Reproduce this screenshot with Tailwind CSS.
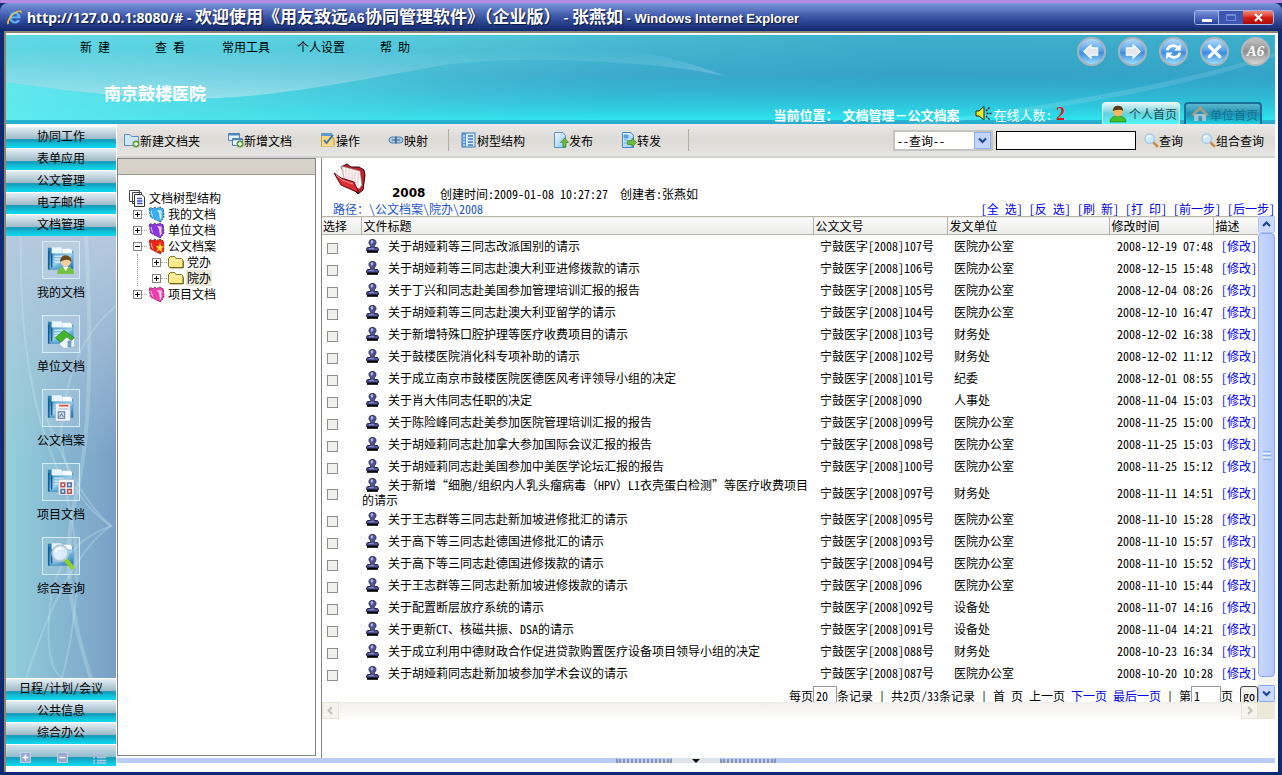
<!DOCTYPE html>
<html lang="zh-CN">
<head>
<meta charset="utf-8">
<title>欢迎使用《用友致远A6协同管理软件》（企业版）</title>
<script src="https://cdn.jsdelivr.net/npm/@tailwindcss/browser@4"></script>
</head>
<body class="h-screen overflow-hidden bg-white font-['Noto_Sans_CJK_SC',sans-serif] text-[12px] leading-[15px] text-black [font-feature-settings:'hwid']">

<svg class="absolute size-0" aria-hidden="true">
  <defs>
    <linearGradient id="gBall" x1="0" y1="0" x2="0" y2="1"><stop offset="0" stop-color="#b9defa"/><stop offset=".45" stop-color="#5aa4ea"/><stop offset=".55" stop-color="#3f8cde"/><stop offset="1" stop-color="#9fe6ff"/></linearGradient>
    <linearGradient id="gBallGray" x1="0" y1="0" x2="0" y2="1"><stop offset="0" stop-color="#c4c4c4"/><stop offset=".5" stop-color="#8f8f8f"/><stop offset="1" stop-color="#dcdcdc"/></linearGradient>
    <linearGradient id="gDoc" x1="0" y1="0" x2="1" y2="1"><stop offset="0" stop-color="#f4fbff"/><stop offset="1" stop-color="#8dc3f0"/></linearGradient>
    <linearGradient id="gBox" x1="0" y1="0" x2="1" y2="1"><stop offset="0" stop-color="#2f86bd"/><stop offset=".5" stop-color="#7fc2e6"/><stop offset="1" stop-color="#1e6fae"/></linearGradient>
  </defs>
  <symbol id="stamp" viewBox="0 0 13 14">
    <path d="M6.500 0.500C8.700 .5 10 1.700 10 3.500C10 5 8.600 5.800 8.300 7.500L8.500 8.500H11.500L12.500 10V11.500H.5V10L1.500 8.500H4.500L4.700 7.500C4.400 5.800 3 5 3 3.500C3 1.700 4.300 .5 6.500 .5Z" fill="#4f5398" stroke="#16183c" stroke-width=".9"/>
    <path d="M5 2Q6 1 7 2L6 4.500Q4.500 4 5 2ZM3 9.600H8" fill="#c4c8ee" stroke="#aab0e4" stroke-width=".7"/>
    <rect x="1" y="12" width="11" height="1.800" fill="#000"/>
  </symbol>
  <symbol id="plus" viewBox="0 0 9 9"><rect x=".5" y=".5" width="8" height="8" fill="#fff" stroke="#848484"/><path d="M2 4.500H7M4.500 2V7" stroke="#000"/></symbol>
  <symbol id="minus" viewBox="0 0 9 9"><rect x=".5" y=".5" width="8" height="8" fill="#fff" stroke="#848484"/><path d="M2 4.500H7" stroke="#000"/></symbol>
  <symbol id="book" viewBox="0 0 17 16">
    <path d="M1 2.500L3 1.500L4.500 2.500L7 1L8.500 2.500L12 1L15.500 3L16 11L13 15.500H11L2.500 11Z" fill="currentColor" stroke="#3a3a3a" stroke-width=".8" stroke-dasharray="2 1"/>
    <path d="M9 4L13.500 4.500V12L12 14L11 7Z" fill="#fff" fill-opacity=".8"/>
    <path d="M1.500 3.500L10 6.500L11 15L3 11Z" fill="currentColor"/><path d="M3 5L4.500 10.500" stroke="#fff" stroke-opacity=".7"/>
  </symbol>
  <symbol id="folder" viewBox="0 0 16 14">
    <path d="M.5 3.500L2.500 1.500H6.500L8 3.500H13.500L15 5V12.500H1.500L.5 11Z" fill="#ffe88a" stroke="#8c7a1c"/><path d="M1.500 5H13.500M2 4V11" stroke="#fffbd0"/><path d="M2 12.900H15.300V6" fill="none" stroke="#5b4e10" stroke-width=".8"/>
  </symbol>
  <symbol id="lens" viewBox="0 0 16 16"><path d="M10 10L14 14" stroke="#d28a3c" stroke-width="3" stroke-linecap="round"/><circle cx="6" cy="6" r="5" fill="#cfe9fb" stroke="#a5cbe8" stroke-width="1.500"/><path d="M3 5.500Q4 3 7 3" stroke="#fff" stroke-width="1.500" fill="none"/></symbol>
  <symbol id="boxbase" viewBox="0 0 32 32">
    <path d="M2 3H12L14 6H29V26H2Z" fill="#2a7fb8"/><path d="M6 2.500H16L18 5V12H6Z" fill="#e9f6ff"/><path d="M18 4H26L28 6V12H18Z" fill="#f6fbff"/>
    <path d="M3 9H29V26L3 25Z" fill="url(#gBox)"/><path d="M3 6V26M6 9V24" stroke="#14598f" stroke-width="1.500"/><path d="M9 12H19M9 15H17M9 18H15" stroke="#d5effc" stroke-width="1.200"/><path d="M7 23L28 12V10H7Z" fill="#fff" fill-opacity=".25"/>
  </symbol>
</svg>

<div class="flex h-full flex-col bg-[#0d2a73]">
  <div class="h-[3px] shrink-0 bg-[#b58be0]"></div>

  <!-- window title bar -->
  <header class="flex h-7 shrink-0 items-center gap-1 rounded-t-lg bg-linear-to-b from-[#7d95dc] via-[#3c56a8] to-[#12276b] pl-[6px] pr-2 font-bold text-white [text-shadow:1px_1px_1px_#0a1640]">
    <svg class="size-[17px] shrink-0" viewBox="0 0 17 17"><path d="M8.500 2.500A6 6 0 1 0 14.500 11H10.800A2.700 2.700 0 0 1 5.900 9.400H14.700A6 6 0 0 0 8.500 2.500ZM5.900 7.200A2.700 2.700 0 0 1 11.200 7.200Z" fill="#67b4f5" stroke="#2467c0" stroke-width=".5"/><path d="M1.500 15.500C-.5 12 6 3 13 1.500C15.500 1 16.500 2.500 15 5.500C15.500 3 14 2.300 11.500 3.200C6.500 5.500 2 11.500 3 14.500Z" fill="#f6c33c"/></svg>
    <h1 class="flex grow items-baseline whitespace-pre text-[14px] leading-[20px] [font-feature-settings:normal]"><span class="font-['Noto_Sans']">http://127.0.0.1:8080/# - </span><span class="text-[17px]">欢迎使用《用友致远</span><span class="font-['Liberation_Mono']">A6</span><span class="text-[17px]">协同管理软件》（企业版）</span><span> - </span><span class="text-[17px]">张燕如</span><span class="font-['Liberation_Sans'] text-[13px]"> - Windows Internet Explorer</span></h1>
    <div class="flex h-[15px] overflow-hidden rounded-[3px] border border-[#a9b6e6]">
      <button aria-label="最小化" class="flex w-6 items-end justify-center border-r border-[#a9b6e6] bg-linear-to-b from-[#7c93dd] to-[#24409c] pb-[2px]"><span class="h-[3px] w-[10px] bg-white"></span></button>
      <button aria-label="最大化" class="flex w-6 items-center justify-center bg-[#3c56b2]"><span class="h-[7px] w-[10px] border border-t-2 border-[#7189d8]"></span></button>
      <button aria-label="关闭" class="flex w-[30px] items-center justify-center bg-linear-to-b from-[#f08a7c] via-[#d81e14] to-[#a80a08]"><svg class="size-[9px]" viewBox="0 0 9 9"><path d="M1 1L8 8M8 1L1 8" stroke="#fff" stroke-width="2"/></svg></button>
    </div>
  </header>

  <div class="mx-1 mb-[3px] flex min-h-0 flex-1 flex-col border-l-2 border-t-2 border-[#8a8573] bg-white pr-[3px] pt-[2px]">

    <!-- banner -->
    <div class="relative h-[89px] shrink-0 overflow-hidden bg-linear-to-r from-[#63dce6] via-[#3fadca] via-70% to-[#3cb0cc]">
      <svg class="absolute inset-0 size-full" viewBox="0 0 1270 90" preserveAspectRatio="none">
        <defs>
          <linearGradient id="lo" x1="0" y1="0" x2="0" y2="1"><stop offset="0" stop-color="#2795c3" stop-opacity="0"/><stop offset=".45" stop-color="#2795c3" stop-opacity=".45"/><stop offset=".95" stop-color="#2de4ee"/><stop offset=".96" stop-color="#22b4d0"/><stop offset="1" stop-color="#30a8cc"/></linearGradient>
          <linearGradient id="sw" gradientUnits="userSpaceOnUse" x1="0" y1="15" x2="0" y2="66"><stop offset="0" stop-color="#fff" stop-opacity="0"/><stop offset="1" stop-color="#fff" stop-opacity=".42"/></linearGradient>
          <linearGradient id="aq" x1="0" y1="0" x2="1" y2="0"><stop offset="0" stop-color="#62f2f4" stop-opacity=".7"/><stop offset="1" stop-color="#45e6ee" stop-opacity="0"/></linearGradient>
          <linearGradient id="lt" x1="0" y1="0" x2="1" y2="0"><stop offset="0" stop-color="#5fd6e2" stop-opacity=".8"/><stop offset="1" stop-color="#5fd6e2" stop-opacity="0"/></linearGradient>
        </defs>
        <rect width="1270" height="90" fill="url(#lo)"/>
        <rect width="600" height="86" fill="url(#lt)"/>
        <path d="M0 48C100 62 170 68 240 62C320 54 380 40 440 30Q520 20 640 30Q690 34 720 42Q680 24 600 10L560 0H0Z" fill="url(#sw)"/>
        <path d="M0 48C100 62 170 68 240 62C320 54 380 40 440 30V86H0Z" fill="url(#aq)"/>
        <path d="M900 90Q1140 60 1270 18V22Q1140 66 930 90Z" fill="#fff" fill-opacity=".12"/>
      </svg>
      <div class="relative flex h-full flex-col pl-[74px] pr-[5px]">
        <div class="flex items-start">
          <nav class="grid grid-cols-[75px_67px_75px_83px_40px] pt-[4px]">
            <a href="#">新 建</a><a href="#">查 看</a><a href="#">常用工具</a><a href="#">个人设置</a><a href="#">帮 助</a>
          </nav>
          <div class="ml-auto flex gap-3 pt-[2px]">
            <button aria-label="后退"><svg class="size-[29px]" viewBox="0 0 28 28"><circle cx="14" cy="14" r="13" fill="url(#gBall)" stroke="#a9b4bd" stroke-width="2"/><path d="M6.500 14L13.500 7.500V10.500H20V17.500H13.500V20.500Z" fill="#e4e6ea" stroke="#fff"/></svg></button>
            <button aria-label="前进"><svg class="size-[29px]" viewBox="0 0 28 28"><circle cx="14" cy="14" r="13" fill="url(#gBall)" stroke="#a9b4bd" stroke-width="2"/><path d="M21.500 14L14.500 7.500V10.500H8V17.500H14.500V20.500Z" fill="#e4e6ea" stroke="#fff"/></svg></button>
            <button aria-label="刷新"><svg class="size-[29px]" viewBox="0 0 28 28"><circle cx="14" cy="14" r="13" fill="url(#gBall)" stroke="#a9b4bd" stroke-width="2"/><path d="M8 13C8.500 8.500 15 6.500 18.500 10.500M20 15C19.500 19.500 13 21.500 9.500 17.500" fill="none" stroke="#fff" stroke-width="2.600"/><path d="M21 6.500V13H14.500ZM7 21.500V15H13.500Z" fill="#fff"/></svg></button>
            <button aria-label="退出"><svg class="size-[29px]" viewBox="0 0 28 28"><circle cx="14" cy="14" r="13" fill="url(#gBall)" stroke="#a9b4bd" stroke-width="2"/><path d="M9 9L19 19M19 9L9 19" stroke="#fff" stroke-width="3.200" stroke-linecap="round"/></svg></button>
            <button aria-label="关于A6" class="relative"><svg class="size-[29px]" viewBox="0 0 28 28"><circle cx="14" cy="14" r="13" fill="url(#gBallGray)" stroke="#b9b9b9" stroke-width="2"/></svg><span class="absolute inset-0 flex items-center justify-center font-['Liberation_Serif',serif] text-[15px] font-bold italic text-white">A6</span></button>
          </div>
        </div>
        <div class="pl-[24px] pt-[19px] text-[17px] font-bold leading-[16px] text-white">南京鼓楼医院</div>
        <div class="mt-auto flex items-end justify-end text-[13px] text-white">
          <div class="pb-[2px] font-bold [font-feature-settings:normal]">当前位置：<span class="pl-1">文档管理－公文档案</span></div>
          <svg class="mb-[2px] ml-4 size-[17px]" viewBox="0 0 17 17"><path d="M1 6H4L9 1.500V15L4 11H1Z" fill="#e6ee1e" stroke="#222"/><path d="M11 6L15 2M11.500 8.500H16.500M11 11L15 15" stroke="#222" stroke-width="1.400" stroke-dasharray="2 1"/></svg>
          <div class="pb-[2px] pl-[1px]">在线人数:</div>
          <b class="w-[50px] pb-[2px] pl-1 font-['Liberation_Serif',serif] text-[18px] text-[#e81414]">2</b>
          <button class="flex h-[22px] w-[78px] items-center gap-[2px] rounded-t-sm border border-b-0 border-[#e8fbfc] bg-linear-to-b from-[#e2f6f8] via-[#63d2dc] to-[#4ef6f8] pl-[6px] text-[12px] text-[#1d4d55]">
            <svg class="size-[18px] shrink-0" viewBox="0 0 18 18"><path d="M1 17Q1 11 9 11Q17 11 17 17Z" fill="#43c02c" stroke="#2a8418" stroke-width=".7"/><circle cx="9" cy="6.500" r="5" fill="#f2b95c"/><path d="M3.800 6Q4 .8 9 .8Q14 .8 14.200 6Q11 3.500 3.800 6Z" fill="#5a3a1a"/></svg>个人首页</button>
          <button class="ml-[4px] mr-[8px] flex h-[22px] w-[78px] items-center gap-[1px] rounded-t-sm border-2 border-b-0 border-[#186f96] bg-linear-to-b from-[#58b7cc] via-[#1a90b4] to-[#1fd0e0] pl-[5px] text-[12px] text-[#117089]">
            <svg class="size-[18px] shrink-0" viewBox="0 0 18 18"><path d="M3 9V16H15V9" fill="#9fc4cf"/><path d="M0 10L9 1L18 10L16 11L9 5L2 11Z" fill="#a59a80"/><rect x="7.500" y="11" width="3.500" height="5" fill="#3b97ad"/></svg>单位首页</button>
        </div>
      </div>
    </div>

    <div class="flex min-h-0 flex-1">

      <!-- left navigation -->
      <aside class="mb-[6px] flex w-[110px] shrink-0 flex-col pt-[2px]">
        <button class="h-[22px] shrink-0 border-t border-white bg-[linear-gradient(#e6eff5,#9cb9c8_56%,#1499b8_60%,#0fd6ec_95%)] pb-[4px]">协同工作</button>
        <button class="h-[22px] shrink-0 border-t border-white bg-[linear-gradient(#e6eff5,#9cb9c8_56%,#1499b8_60%,#0fd6ec_95%)] pb-[4px]">表单应用</button>
        <button class="h-[22px] shrink-0 border-t border-white bg-[linear-gradient(#e6eff5,#9cb9c8_56%,#1499b8_60%,#0fd6ec_95%)] pb-[4px]">公文管理</button>
        <button class="h-[22px] shrink-0 border-t border-white bg-[linear-gradient(#e6eff5,#9cb9c8_56%,#1499b8_60%,#0fd6ec_95%)] pb-[4px]">电子邮件</button>
        <button class="h-[22px] shrink-0 border-t border-white bg-[linear-gradient(#e6eff5,#9cb9c8_56%,#1499b8_60%,#0fd6ec_95%)] pb-[4px]">文档管理</button>
        <div class="relative min-h-0 flex-1 overflow-hidden bg-linear-to-r from-[#93d0dc] to-[#7a9fc6]">
          <svg class="absolute inset-0 size-full" viewBox="0 0 110 442" preserveAspectRatio="none">
            <defs><linearGradient id="topfade" x1="0" y1="0" x2="0" y2="1"><stop offset="0" stop-color="#b5c9de"/><stop offset=".5" stop-color="#b5c9de" stop-opacity="0"/></linearGradient></defs>
            <rect width="110" height="442" fill="url(#topfade)"/>
            <g fill="none" stroke="#d8f4f8" stroke-opacity=".25" stroke-width="2"><path d="M15 0Q12 140 50 230T56 442"/><path d="M110 70Q60 110 55 200Q60 260 105 290Q60 320 20 442"/><path d="M80 0Q90 180 70 260T85 442" stroke-width="4"/><path d="M40 180Q70 260 105 290Q50 310 44 370T56 442"/></g>
          </svg>
          <div class="relative flex flex-col items-center gap-4 pt-[5px]">
            <button class="flex flex-col items-center gap-[5px]"><span class="border border-[#d5edf2] bg-white/10 p-[3px]"><svg class="size-[30px]" viewBox="0 0 32 32"><use href="#boxbase"/><path d="M12 31Q12 23 21 23Q30 23 30 31Z" fill="#74c243"/><path d="M18 23L21 28L24 23Z" fill="#fff"/><circle cx="21" cy="17.500" r="5.500" fill="#f3cf9b"/><path d="M15 18Q15 11 21 11Q27 11 27 18Q23 13.500 15 18Z" fill="#6e4b1e"/></svg></span>我的文档</button>
            <button class="flex flex-col items-center gap-[5px]"><span class="border border-[#d5edf2] bg-white/10 p-[3px]"><svg class="size-[30px]" viewBox="0 0 32 32"><use href="#boxbase"/><path d="M15 21L24 17L30 21V29L19 31L15 27Z" fill="#f1f5f8"/><path d="M10 20L19 12L30 20L27 23L22 19L16 25Z" fill="#43b52c" stroke="#23791a" stroke-width=".7"/><rect x="23" y="23" width="4" height="7" fill="#6c9fc4"/></svg></span>单位文档</button>
            <button class="flex flex-col items-center gap-[5px]"><span class="border border-[#d5edf2] bg-white/10 p-[3px]"><svg class="size-[30px]" viewBox="0 0 32 32"><use href="#boxbase"/><path d="M10 11H26V30H10Z" fill="#eef4fb" stroke="#8eabc6" stroke-width=".7"/><path d="M14 13.500H24" stroke="#e0533c" stroke-width="2"/><path d="M13 17H24" stroke="#9ab4cc"/><rect x="13" y="20" width="7" height="7" fill="#cfdcea" stroke="#536f92"/><path d="M14.500 25.500L16.500 22L18.500 25.500" stroke="#536f92" fill="none"/></svg></span>公文档案</button>
            <button class="flex flex-col items-center gap-[5px]"><span class="border border-[#d5edf2] bg-white/10 p-[3px]"><svg class="size-[30px]" viewBox="0 0 32 32"><use href="#boxbase"/><rect x="13" y="13" width="17" height="17" fill="#f5f7fb" stroke="#93a8c0" stroke-width=".7"/><g stroke-width="1.600" fill="#d9e2ef"><rect x="16" y="17" width="4" height="4" stroke="#c0504a"/><rect x="23" y="17" width="4" height="4" stroke="#4f6fa8"/><rect x="16" y="24" width="4" height="4" stroke="#4f6fa8"/><rect x="23" y="24" width="4" height="4" stroke="#c0504a"/></g></svg></span>项目文档</button>
            <button class="flex flex-col items-center gap-[5px]"><span class="border border-[#d5edf2] bg-white/10 p-[3px]"><svg class="size-[30px]" viewBox="0 0 32 32"><use href="#boxbase"/><path d="M21 20L28 28" stroke="#8fd025" stroke-width="4.500" stroke-linecap="round"/><circle cx="15" cy="13" r="8.500" fill="#e2f1fb" fill-opacity=".85" stroke="#b4c6d6" stroke-width="2"/><path d="M10 12Q11 8 16 8" stroke="#fff" stroke-width="2" fill="none"/></svg></span>综合查询</button>
          </div>
        </div>
        <button class="h-[22px] shrink-0 border-t border-white bg-[linear-gradient(#e6eff5,#9cb9c8_56%,#1499b8_60%,#0fd6ec_95%)] pb-[4px]">日程/计划/会议</button>
        <button class="h-[22px] shrink-0 border-t border-white bg-[linear-gradient(#e6eff5,#9cb9c8_56%,#1499b8_60%,#0fd6ec_95%)] pb-[4px]">公共信息</button>
        <button class="h-[22px] shrink-0 border-t border-white bg-[linear-gradient(#e6eff5,#9cb9c8_56%,#1499b8_60%,#0fd6ec_95%)] pb-[4px]">综合办公</button>
        <div class="flex h-[22px] shrink-0 items-center justify-between border-t border-white bg-[linear-gradient(#d5e2eb,#8fbccd_56%,#1499b8_60%,#0fd6ec_95%)] pl-[14px] pr-[10px] pt-[3px]">
          <button aria-label="展开"><svg class="size-[11px]" viewBox="0 0 11 11"><rect x=".5" y=".5" width="10" height="10" fill="#97a9cc" stroke="#c3cfe4"/><path d="M2.500 5.500H8.500M5.500 2.500V8.500" stroke="#fff" stroke-width="1.500"/></svg></button>
          <button aria-label="收起"><svg class="size-[11px]" viewBox="0 0 11 11"><rect x=".5" y=".5" width="10" height="10" fill="#97a9cc" stroke="#c3cfe4"/><path d="M2.500 5.500H8.500" stroke="#fff" stroke-width="1.500"/></svg></button>
          <button aria-label="设置"><svg class="h-[14px] w-[13px]" viewBox="0 0 13 14"><path d="M1 2H3.500V4H1ZM6 2L8 4L11 1M0 7.500H2M4 7.500H13M0 10.500H2M4 10.500H13M0 13H2M4 13H13" fill="none" stroke="#b9c3dc" stroke-width="1.500"/></svg></button>
        </div>
      </aside>

      <div class="ml-[1px] flex min-w-0 flex-1 flex-col">

        <!-- toolbar -->
        <div class="flex h-[34px] shrink-0 items-center border-b-2 border-[#d2d2d0] bg-linear-to-b from-[#e9e9e9] via-[#dcdad5] to-[#e6e6e4] pl-[7px] pr-[11px]">
          <div class="flex items-center gap-7">
            <button class="flex items-center"><svg class="size-4" viewBox="0 0 16 16"><path d="M.5 2.500H6L7.500 4.500H14.500V13.500H.5Z" fill="#cfe5f8" stroke="#5c8fc2"/><circle cx="12" cy="12" r="3.500" fill="#5d9e3a"/><path d="M10 12H14M12 10V14" stroke="#fff" stroke-width="1.300"/></svg>新建文档夹</button>
            <button class="flex items-center"><svg class="size-4" viewBox="0 0 16 16"><path d="M.5 1.500H11.500V8.500H.5Z" fill="#e6f1fb" stroke="#4f86bf"/><path d="M.5 2.500H11.500" stroke="#4f86bf" stroke-width="2"/><path d="M4.500 6.500H14.500V13.500H4.500Z" fill="#eef6fc" stroke="#4f86bf"/><path d="M4.500 7.500H14.500" stroke="#4f86bf" stroke-width="1.500"/><circle cx="12" cy="12" r="3.500" fill="#5d9e3a"/><path d="M10 12H14M12 10V14" stroke="#fff" stroke-width="1.300"/></svg>新增文档</button>
            <button class="flex items-center"><svg class="size-4" viewBox="0 0 16 16"><path d="M1.500 1.500H12V6H14V14.500H1.500Z" fill="#f5d984" stroke="#c79a3a"/><path d="M1 1H12V4H1Z" fill="#5b9bd0"/><path d="M4 8L6.500 11L13 3" fill="none" stroke="#3c6ea6" stroke-width="1.800"/><path d="M2 14H14" stroke="#f7e9b6"/></svg>操作</button>
            <button class="flex items-center"><svg class="size-4" viewBox="0 0 16 16"><rect x="1" y="5" width="8" height="6" rx="3" fill="#a9c7e2" stroke="#5580ab"/><rect x="7" y="5" width="8" height="6" rx="3" fill="#a9c7e2" stroke="#5580ab"/><path d="M4 8H12M8 4V12" stroke="#3c6491" stroke-width="1.200"/></svg>映射</button>
          </div>
          <span class="ml-5 h-[22px] w-px bg-[#b3ada0]"></span>
          <div class="ml-3 flex items-center gap-7">
            <button class="flex items-center"><svg class="size-4" viewBox="0 0 16 16"><rect x="1" y="1" width="13" height="14" fill="#d9eafa" stroke="#3f78b6"/><path d="M1 1H5V15H1Z" fill="#5b96d1"/><path d="M2 4H4M2 7H4M2 10H4M2 13H4" stroke="#fff"/><path d="M7 4H12M7 7H12M7 10H12M7 13H12" stroke="#3f78b6" stroke-width="1.500"/></svg>树型结构</button>
            <button class="flex items-center"><svg class="size-4" viewBox="0 0 16 16"><path d="M1.500 .5H10L12.500 3.500V15.500H1.500Z" fill="url(#gDoc)" stroke="#5593cc"/><path d="M11.500 6L15.500 10.500H13V15H10V10.500H7.500Z" fill="#6cba3f" stroke="#3c8a22" stroke-width=".7"/></svg>发布</button>
            <button class="flex items-center"><svg class="size-4" viewBox="0 0 16 16"><path d="M1.500 .5H10L12.500 3.500V15.500H1.500Z" fill="url(#gDoc)" stroke="#3f8ad0"/><path d="M3 3H7V6H3ZM3 8H6M3 11H6" fill="#5aa3e0" stroke="#5aa3e0"/><path d="M15.500 10.500L11 6V8.500H6.500V12.500H11V15Z" fill="#6cba3f" stroke="#3c8a22" stroke-width=".7"/></svg>转发</button>
          </div>
          <span class="ml-[27px] h-[22px] w-px bg-[#b3ada0]"></span>
          <form class="ml-auto flex items-center">
            <div class="relative">
              <select aria-label="查询" class="block h-[21px] w-[100px] appearance-none border-2 border-[#c4c4c0] bg-white pl-[2px] text-[12px] leading-[15px]"><option>--查询--</option></select>
              <svg class="pointer-events-none absolute right-[2px] top-[2px] size-[17px]" viewBox="0 0 17 17"><rect x=".5" y=".5" width="16" height="16" fill="#c3d5fd" stroke="#8aaef2"/><path d="M5 6.500L8.500 10L12 6.500" fill="none" stroke="#1c469c" stroke-width="2.200"/></svg>
            </div>
            <input type="text" aria-label="查询内容" class="ml-[3px] h-[19px] w-[140px] border border-black bg-white px-1">
            <button type="button" class="ml-2 flex items-center"><svg class="size-[15px]"><use href="#lens"/></svg>查询</button>
            <button type="button" class="ml-[18px] flex items-center"><svg class="size-[15px]"><use href="#lens"/></svg>组合查询</button>
          </form>
        </div>

        <div class="flex min-h-0 flex-1">
          <!-- document tree -->
          <div class="mb-[2px] flex w-[199px] shrink-0 flex-col border border-[#848284] bg-white">
            <div class="h-[16px] shrink-0 border-b border-[#9a9890] bg-[#d6d2ca]"></div>
            <div class="pl-[11px] pt-[15px] leading-[16px]">
              <div class="flex h-4 items-center gap-[3px]"><svg class="size-[17px]" viewBox="0 0 17 17"><path d="M.5 .5H10.500V11.500H.5ZM3.500 2.500H12.500V13.500H3.500Z" fill="#fff" stroke="#444"/><path d="M5.500 4.500H13L15.500 7V16.500H5.500Z" fill="#fff" stroke="#333"/><path d="M8 8.500H13M8 11H13.500M8 13.500H13.500" stroke="#3a4fc8" stroke-width="1.300"/></svg>文档树型结构</div>
              <ul class="pl-1">
                <li class="flex h-4 items-center"><svg class="size-[9px]"><use href="#plus"/></svg><span class="mr-[1px] w-[5px] border-b border-dotted border-[#999]"></span><svg class="h-4 w-[17px] text-[#38b0f0]"><use href="#book"/></svg><span class="pl-[3px]">我的文档</span></li>
                <li class="flex h-4 items-center"><svg class="size-[9px]"><use href="#plus"/></svg><span class="mr-[1px] w-[5px] border-b border-dotted border-[#999]"></span><svg class="h-4 w-[17px] text-[#8b35e0]"><use href="#book"/></svg><span class="pl-[3px]">单位文档</span></li>
                <li>
                  <div class="flex h-4 items-center"><svg class="size-[9px]"><use href="#minus"/></svg><span class="mr-[1px] w-[5px] border-b border-dotted border-[#999]"></span><svg class="h-4 w-[17px] text-[#ee2418]" viewBox="0 0 17 16"><use href="#book"/><path d="M8 4H16V14H8Z" fill="#e8281c"/><path d="M12 4L13 8L16 8.500L13.500 10.500L14 14L11.500 12L8.500 13.500L10 10.500L8 8L11 8Z" fill="#ffdd30"/></svg><span class="pl-[3px]">公文档案</span></div>
                  <ul class="ml-1 border-l border-dotted border-[#999] pl-[14px]">
                    <li class="flex h-4 items-center"><svg class="size-[9px]"><use href="#plus"/></svg><span class="mr-[1px] w-[6px] border-b border-dotted border-[#999]"></span><svg class="h-[14px] w-4"><use href="#folder"/></svg><span class="ml-[2px] px-[1px]">党办</span></li>
                    <li class="flex h-4 items-center"><svg class="size-[9px]"><use href="#plus"/></svg><span class="mr-[1px] w-[6px] border-b border-dotted border-[#999]"></span><svg class="h-[14px] w-4"><use href="#folder"/></svg><span class="ml-[2px] bg-[#ece9d8] px-[1px]">院办</span></li>
                  </ul>
                </li>
                <li class="flex h-4 items-center"><svg class="size-[9px]"><use href="#plus"/></svg><span class="mr-[1px] w-[5px] border-b border-dotted border-[#999]"></span><svg class="h-4 w-[17px] text-[#f03cae]"><use href="#book"/></svg><span class="pl-[3px]">项目文档</span></li>
              </ul>
            </div>
          </div>

          <!-- document list -->
          <main class="ml-[5px] flex min-w-0 flex-1 flex-col border-l border-[#848284] bg-white">
            <div class="flex h-[43px] shrink-0 items-end pl-[11px]">
              <svg class="mb-[6px] h-[32px] w-[34px]" viewBox="0 0 34 32"><path d="M8 4L14 1L18 4L26 4L31 7L32 12L30 27L25 31L20 26Z" fill="#c8202a" stroke="#2b0a0a"/><path d="M8 3L27 8L29 22L26 26L12 18Z" fill="#fff" stroke="#777" stroke-width=".6"/><path d="M10 4V16M13 5V18M16 6V19M19 7V20M22 8V21M25 9V23" stroke="#f0b8b8"/><path d="M1 10L8 15L21 19L26 30L8 22Z" fill="#dc2c34" stroke="#5e0b10"/><path d="M3 12L9 17L20 21" stroke="#f79a9a" fill="none"/></svg>
              <b class="ml-[25px] w-12 font-['DejaVu_Sans',sans-serif]">2008</b>
              <span class="whitespace-pre">创建时间:2009-01-08 10:27:27  创建者:张燕如</span>
            </div>
            <div class="flex h-[15px] shrink-0 items-center justify-between pl-[11px] whitespace-nowrap">
              <span class="text-[#2255c8]">路径：\公文档案\院办\2008</span>
              <span class="text-[#0000e8]"><a href="#">[全 选]</a> <a href="#">[反 选]</a> <a href="#">[刷 新]</a> <a href="#">[打 印]</a> <a href="#">[前一步]</a> <a href="#">[后一步]</a></span>
            </div>

            <div class="flex min-h-0 flex-1">
              <div class="min-w-0 flex-1 overflow-hidden">
                <table class="w-full table-fixed border-collapse">
                  <colgroup><col class="w-[39px]"><col><col class="w-[134px]"><col class="w-[162px]"><col class="w-[104px]"><col class="w-[45px]"></colgroup>
                  <thead><tr class="h-[18px] border-y border-[#b8b4a8] bg-linear-to-b from-[#fbfbfa] to-[#ebebea] text-left">
                    <th class="border-r border-[#b8b4a8] pl-[1px] font-normal">选择</th><th class="border-r border-[#b8b4a8] pl-[2px] font-normal">文件标题</th><th class="border-r border-[#b8b4a8] pl-[2px] font-normal">公文文号</th><th class="border-r border-[#b8b4a8] pl-[2px] font-normal">发文单位</th><th class="border-r border-[#b8b4a8] pl-[2px] font-normal">修改时间</th><th class="pl-[2px] font-normal">描述</th>
                  </tr></thead>
                  <tbody id="rows"></tbody>
                </table>
                <div class="flex items-start justify-end whitespace-pre pt-[2px] leading-[19px]"><label class="flex">每页<input value="20" class="h-[20px] w-6 border border-[#999] px-[2px] leading-[15px]"></label><span>条记录 | 共2页/33条记录 | 首 页 上一页 <a href="#" class="text-[#0000e8]">下一页</a> <a href="#" class="text-[#0000e8]">最后一页</a> | </span><label class="flex">第<input value="1" class="h-[20px] w-[30px] border border-[#999] px-[2px] leading-[15px]"></label><span>页 </span><button class="ml-[1px] h-[20px] w-[18px] rounded-[3px] border border-[#444] bg-[#f3f2ec] leading-[15px]">go</button></div>
              </div>
              <!-- vertical scroll bar -->
              <div class="flex w-[17px] shrink-0 flex-col bg-[#f5f4f0]">
                <svg class="size-[17px] shrink-0" viewBox="0 0 17 17"><rect x=".5" y=".5" width="16" height="16" rx="1" fill="#cbdafd" stroke="#a8c2f5"/><path d="M5 10L8.500 6.500L12 10" fill="none" stroke="#1c469c" stroke-width="2.200"/></svg>
                <div class="mb-2 flex flex-1 flex-col items-center justify-center gap-[1px] rounded-sm border border-[#88a8f0] bg-linear-to-r from-[#c9d8fd] to-[#b4c7f7]"><span class="h-px w-2 bg-[#8cb0f8]"></span><span class="h-px w-2 bg-[#eef4fe]"></span><span class="h-px w-2 bg-[#8cb0f8]"></span><span class="h-px w-2 bg-[#eef4fe]"></span><span class="h-px w-2 bg-[#8cb0f8]"></span></div>
                <svg class="size-[17px] shrink-0" viewBox="0 0 17 17"><rect x=".5" y=".5" width="16" height="16" rx="1" fill="#cbdafd" stroke="#88a8f0"/><path d="M5 6.500L8.500 10L12 6.500" fill="none" stroke="#1c469c" stroke-width="2.200"/></svg>
              </div>
            </div>
            <!-- horizontal scroll bar -->
            <div class="mb-[39px] flex h-[17px] shrink-0 items-center justify-between bg-linear-to-b from-[#f0efeb] to-[#fdfdfb]">
              <svg class="size-[17px]" viewBox="0 0 17 17"><rect x=".5" y=".5" width="16" height="16" fill="#f4f3ee" stroke="#e6e3d6"/><path d="M10 5L6.500 8.500L10 12" fill="none" stroke="#c4c2b8" stroke-width="2"/></svg>
              <div class="flex"><svg class="size-[17px]" viewBox="0 0 17 17"><rect x=".5" y=".5" width="16" height="16" fill="#f4f3ee" stroke="#e6e3d6"/><path d="M7 5L10.500 8.500L7 12" fill="none" stroke="#c4c2b8" stroke-width="2"/></svg><span class="size-[17px] bg-[#ece9d8]"></span></div>
            </div>
          </main>
        </div>

        <!-- splitter -->
        <div class="mb-[9px] flex h-[5px] shrink-0 items-center justify-center bg-[#b9cbf7]">
          <span class="w-14 border-y-2 border-dotted border-[#8b93a6]"></span>
          <button aria-label="收起" class="flex h-[5px] w-12 items-center justify-center bg-[#dfe3ea]"><svg class="h-[4px] w-[8px]" viewBox="0 0 8 4"><path d="M0 0H8L4 4Z" fill="#111"/></svg></button>
          <span class="w-14 border-y-2 border-dotted border-[#8b93a6]"></span>
        </div>
      </div>
    </div>
  </div>
</div>

<script>
const docs = [
  ["关于胡娅莉等三同志改派国别的请示", "107号", "医院办公室", "2008-12-19 07:48"],
  ["关于胡娅莉等三同志赴澳大利亚进修拨款的请示", "106号", "医院办公室", "2008-12-15 15:48"],
  ["关于丁兴和同志赴美国参加管理培训汇报的报告", "105号", "医院办公室", "2008-12-04 08:26"],
  ["关于胡娅莉等三同志赴澳大利亚留学的请示", "104号", "医院办公室", "2008-12-10 16:47"],
  ["关于新增特殊口腔护理等医疗收费项目的请示", "103号", "财务处", "2008-12-02 16:38"],
  ["关于鼓楼医院消化科专项补助的请示", "102号", "财务处", "2008-12-02 11:12"],
  ["关于成立南京市鼓楼医院医德医风考评领导小组的决定", "101号", "纪委", "2008-12-01 08:55"],
  ["关于肖大伟同志任职的决定", "090", "人事处", "2008-11-04 15:03"],
  ["关于陈险峰同志赴美参加医院管理培训汇报的报告", "099号", "医院办公室", "2008-11-25 15:00"],
  ["关于胡娅莉同志赴加拿大参加国际会议汇报的报告", "098号", "医院办公室", "2008-11-25 15:03"],
  ["关于胡娅莉同志赴美国参加中美医学论坛汇报的报告", "100号", "医院办公室", "2008-11-25 15:12"],
  ["关于新增“细胞/组织内人乳头瘤病毒（HPV）L1衣壳蛋白检测”等医疗收费项目的请示", "097号", "财务处", "2008-11-11 14:51"],
  ["关于王志群等三同志赴新加坡进修批汇的请示", "095号", "医院办公室", "2008-11-10 15:28"],
  ["关于高下等三同志赴德国进修批汇的请示", "093号", "医院办公室", "2008-11-10 15:57"],
  ["关于高下等三同志赴德国进修拨款的请示", "094号", "医院办公室", "2008-11-10 15:52"],
  ["关于王志群等三同志赴新加坡进修拨款的请示", "096", "医院办公室", "2008-11-10 15:44"],
  ["关于配置断层放疗系统的请示", "092号", "设备处", "2008-11-07 14:16"],
  ["关于更新CT、核磁共振、DSA的请示", "091号", "设备处", "2008-11-04 14:21"],
  ["关于成立利用中德财政合作促进贷款购置医疗设备项目领导小组的决定", "088号", "财务处", "2008-10-23 16:34"],
  ["关于胡娅莉同志赴新加坡参加学术会议的请示", "087号", "医院办公室", "2008-10-20 10:28"]
];
// Brackets inside a title keep their full width.
const wide = t => t.replace(/[（）]/g, '<span class="[font-feature-settings:normal]">$&</span>');
document.getElementById("rows").innerHTML = docs.map(([t, n, u, d]) => `
<tr class="h-[22px]">
  <td class="pl-[5px] pt-[5px]"><input type="checkbox" aria-label="${t}" class="block size-[11px] appearance-none border border-[#8e8f8f] bg-[#f0f0ec]"></td>
  <td class="pl-[1px] pb-[1px]"><svg class="ml-1 mr-[9px] inline h-[14px] w-[13px] align-[-2px]"><use href="#stamp"/></svg>${wide(t)}</td>
  <td class="pl-[7px] whitespace-nowrap">宁鼓医字[2008]${n}</td>
  <td class="pl-[7px]">${u}</td>
  <td class="text-right whitespace-nowrap">${d}</td>
  <td class="pl-2 whitespace-nowrap"><a href="#" class="text-[#0000e8]">[修改]</a></td>
</tr>`).join("");
</script>
</body>
</html>
